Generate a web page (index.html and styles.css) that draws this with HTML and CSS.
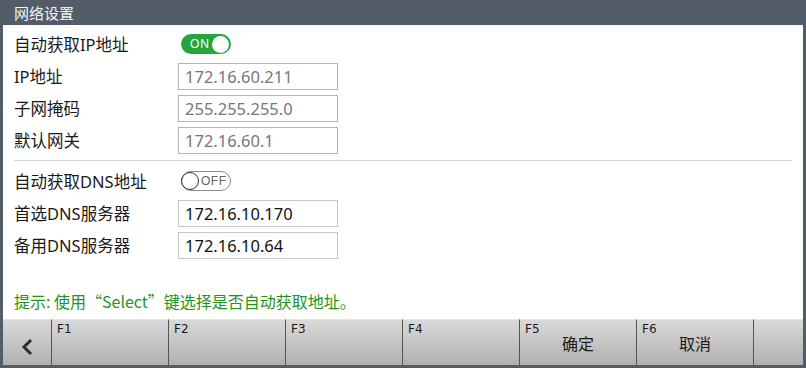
FILE: index.html
```html
<!DOCTYPE html>
<html lang="zh-CN">
<head>
    <meta charset="UTF-8">
    <title>网络设置</title>
    <link rel="stylesheet" href="styles.css">
</head>
<body>
    <div class="window">
        <div class="titlebar">网络设置</div>
        <div class="panel">
            <div class="group">
                <label class="label">自动获取IP地址</label>
                <div class="field"><span class="toggle on"><span class="toggle-text">ON</span><span class="knob"></span></span></div>
                <label class="label">IP地址</label>
                <div class="field"><input class="box" type="text" value="172.16.60.211" disabled></div>
                <label class="label">子网掩码</label>
                <div class="field"><input class="box" type="text" value="255.255.255.0" disabled></div>
                <label class="label">默认网关</label>
                <div class="field"><input class="box" type="text" value="172.16.60.1" disabled></div>
            </div>
            <hr class="divider">
            <div class="group">
                <label class="label">自动获取DNS地址</label>
                <div class="field"><span class="toggle off"><span class="knob"></span><span class="toggle-text">OFF</span></span></div>
                <label class="label">首选DNS服务器</label>
                <div class="field"><input class="box" type="text" value="172.16.10.170"></div>
                <label class="label">备用DNS服务器</label>
                <div class="field"><input class="box" type="text" value="172.16.10.64"></div>
            </div>
            <p class="hint">提示: 使用“Select”键选择是否自动获取地址。</p>
        </div>
        <div class="fkeys">
            <button class="fkey back">
                <svg width="14" height="18" viewBox="0 0 14 18"><path d="M11 2 L4 9 L11 16" fill="none" stroke="#2e2e2e" stroke-width="3"/></svg>
            </button>
            <button class="fkey"><span class="fnum">F1</span></button>
            <button class="fkey"><span class="fnum">F2</span></button>
            <button class="fkey"><span class="fnum">F3</span></button>
            <button class="fkey"><span class="fnum">F4</span></button>
            <button class="fkey"><span class="fnum">F5</span><span class="fname">确定</span></button>
            <button class="fkey"><span class="fnum">F6</span><span class="fname">取消</span></button>
            <button class="fkey last"></button>
        </div>
    </div>
</body>
</html>
```

FILE: styles.css
```css
body { margin: 0; background: #4f5864; font-family: "Noto Sans", "Noto Sans CJK SC", sans-serif; }
.window { width: 806px; height: 368px; display: flex; flex-direction: column; background: #535d69; }
.titlebar { height: 25px; line-height: 25px; padding-left: 14px; color: #f2f2f2; font-size: 15px; font-family: "Noto Sans CJK SC", sans-serif; }
.panel { flex: 1; margin: 0 3px; background: #fff; padding: 3px 11px 8px; display: flex; flex-direction: column; }
.group { display: grid; grid-template-columns: 164px 160px; grid-auto-rows: 32px; align-items: center; }
.label { font-size: 16.5px; color: #1a1a1a; }
.field { display: flex; align-items: center; }
.box { width: 160px; height: 27px; box-sizing: border-box; border: 1px solid #c6c6c6; background: #fff; padding: 0 6px; font-family: inherit; font-size: 16.5px; color: #111; outline: none; }
.box:disabled { border-color: #b4b4b4; color: #777; background: #fff; }
.divider { border: 0; border-top: 1px solid #d2d2d2; margin: 4px 0 4px; }
.toggle { margin-left: 3px; width: 50px; height: 20px; box-sizing: border-box; border-radius: 10px; display: flex; align-items: center; font-family: "Liberation Sans", sans-serif; font-size: 12px; }
.toggle.on { background: #25a63c; color: #fff; padding: 0 2px 0 9px; justify-content: space-between; letter-spacing: 1px; }
.toggle.on .knob { width: 17px; height: 17px; border-radius: 50%; background: #fff; }
.toggle.off { background: #fff; border: 1px solid #8a8a8a; color: #666; letter-spacing: 0.5px; }
.toggle.off .knob { width: 18px; height: 18px; box-sizing: border-box; border-radius: 50%; border: 1px solid #333; margin-left: -1px; }
.toggle.off .toggle-text { margin-left: 2px; }
.hint { margin: auto 0 0; font-size: 16px; line-height: 20px; color: #23951c; font-family: "Noto Sans CJK SC", sans-serif; }
.fkeys { height: 46px; margin: 0 3px 3px; display: flex; }
.fkey { position: relative; width: 117px; height: 46px; border: 0; border-left: 1px solid #555; border-top: 1px solid #e6e6e6; padding: 0; background: linear-gradient(#d9d9d9, #b1b1b1); font-family: "Noto Sans CJK SC", sans-serif; color: #1a1a1a; display: flex; align-items: center; justify-content: center; }
.fkey.back { width: 48px; border-left: 0; padding-top: 8px; }
.fkey.last { width: 50px; }
.fnum { position: absolute; left: 5px; top: 2px; font-size: 12px; font-family: "DejaVu Sans", sans-serif; }
.fname { font-size: 16px; margin-top: 1px; }
```
